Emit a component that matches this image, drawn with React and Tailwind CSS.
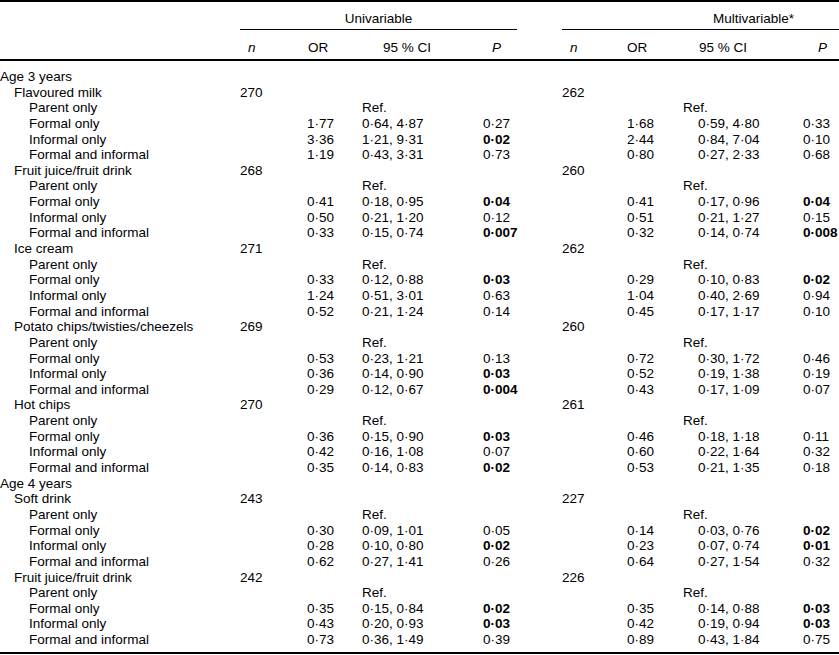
const groups = [
  {
    age: "Age 3 years",
    items: [
      {
        name: "Flavoured milk",
        n: ["270", "262"],
        rows: [
          ["Formal only", ["1·77", "0·64, 4·87", "0·27"], ["1·68", "0·59, 4·80", "0·33"]],
          ["Informal only", ["3·36", "1·21, 9·31", "*0·02"], ["2·44", "0·84, 7·04", "0·10"]],
          ["Formal and informal", ["1·19", "0·43, 3·31", "0·73"], ["0·80", "0·27, 2·33", "0·68"]],
        ],
      },
      {
        name: "Fruit juice/fruit drink",
        n: ["268", "260"],
        rows: [
          ["Formal only", ["0·41", "0·18, 0·95", "*0·04"], ["0·41", "0·17, 0·96", "*0·04"]],
          ["Informal only", ["0·50", "0·21, 1·20", "0·12"], ["0·51", "0·21, 1·27", "0·15"]],
          ["Formal and informal", ["0·33", "0·15, 0·74", "*0·007"], ["0·32", "0·14, 0·74", "*0·008"]],
        ],
      },
      {
        name: "Ice cream",
        n: ["271", "262"],
        rows: [
          ["Formal only", ["0·33", "0·12, 0·88", "*0·03"], ["0·29", "0·10, 0·83", "*0·02"]],
          ["Informal only", ["1·24", "0·51, 3·01", "0·63"], ["1·04", "0·40, 2·69", "0·94"]],
          ["Formal and informal", ["0·52", "0·21, 1·24", "0·14"], ["0·45", "0·17, 1·17", "0·10"]],
        ],
      },
      {
        name: "Potato chips/twisties/cheezels",
        n: ["269", "260"],
        rows: [
          ["Formal only", ["0·53", "0·23, 1·21", "0·13"], ["0·72", "0·30, 1·72", "0·46"]],
          ["Informal only", ["0·36", "0·14, 0·90", "*0·03"], ["0·52", "0·19, 1·38", "0·19"]],
          ["Formal and informal", ["0·29", "0·12, 0·67", "*0·004"], ["0·43", "0·17, 1·09", "0·07"]],
        ],
      },
      {
        name: "Hot chips",
        n: ["270", "261"],
        rows: [
          ["Formal only", ["0·36", "0·15, 0·90", "*0·03"], ["0·46", "0·18, 1·18", "0·11"]],
          ["Informal only", ["0·42", "0·16, 1·08", "0·07"], ["0·60", "0·22, 1·64", "0·32"]],
          ["Formal and informal", ["0·35", "0·14, 0·83", "*0·02"], ["0·53", "0·21, 1·35", "0·18"]],
        ],
      },
    ],
  },
  {
    age: "Age 4 years",
    items: [
      {
        name: "Soft drink",
        n: ["243", "227"],
        rows: [
          ["Formal only", ["0·30", "0·09, 1·01", "0·05"], ["0·14", "0·03, 0·76", "*0·02"]],
          ["Informal only", ["0·28", "0·10, 0·80", "*0·02"], ["0·23", "0·07, 0·74", "*0·01"]],
          ["Formal and informal", ["0·62", "0·27, 1·41", "0·26"], ["0·64", "0·27, 1·54", "0·32"]],
        ],
      },
      {
        name: "Fruit juice/fruit drink",
        n: ["242", "226"],
        rows: [
          ["Formal only", ["0·35", "0·15, 0·84", "*0·02"], ["0·35", "0·14, 0·88", "*0·03"]],
          ["Informal only", ["0·43", "0·20, 0·93", "*0·03"], ["0·42", "0·19, 0·94", "*0·03"]],
          ["Formal and informal", ["0·73", "0·36, 1·49", "0·39"], ["0·89", "0·43, 1·84", "0·75"]],
        ],
      },
    ],
  },
];

const cols = "grid grid-cols-[240px_67px_55px_121px_79px_65px_71px_105px_36px]";

function PVal({ v }) {
  // leading * marks a significant (bold) value
  if (v.startsWith("*")) return <span className="font-bold">{v.slice(1)}</span>;
  return <span>{v}</span>;
}

function Row({ label, indent, cells }) {
  return (
    <div className={`${cols} h-[15.65px] leading-[15.65px] whitespace-nowrap`}>
      <div className={indent}>{label}</div>
      {cells}
    </div>
  );
}

export default function App() {
  return (
    <div className="w-[839px] h-[655px] bg-white text-black text-[13.5px] font-['Liberation_Sans',Arial,sans-serif]">
      <div className="border-t-2 border-black">
        {/* spanner headings */}
        <div className={`${cols} h-[28px]`}>
          <div />
          <div className="col-span-4 pr-[45px]">
            <div className="h-[28px] border-b border-black pt-[9px] leading-[15px] text-center">
              Univariable
            </div>
          </div>
          <div className="col-span-4">
            <div className="h-[28px] border-b border-black pt-[9px] leading-[15px] pl-[151px]">
              Multivariable*
            </div>
          </div>
        </div>

        {/* column headings */}
        <div className={`${cols} h-[31px] border-b-2 border-black pt-[10px] leading-[15px]`}>
          <div />
          <div className="pl-[8px] italic">n</div>
          <div className="pl-[1px]">OR</div>
          <div className="pl-[21px]">95 % CI</div>
          <div className="pl-[9px] italic">P</div>
          <div className="pl-[8px] italic">n</div>
          <div>OR</div>
          <div className="pl-[1px]">95 % CI</div>
          <div className="pl-[15px] italic">P</div>
        </div>

        {/* body */}
        <div className="pt-[8px] pb-[4px] border-b-2 border-black">
          {groups.map((g) => (
            <div key={g.age}>
              <Row label={g.age} indent="" cells={null} />
              {g.items.map((it) => (
                <div key={g.age + it.name}>
                  <Row
                    label={it.name}
                    indent="pl-[14px]"
                    cells={
                      <>
                        <div>{it.n[0]}</div>
                        <div />
                        <div />
                        <div />
                        <div>{it.n[1]}</div>
                      </>
                    }
                  />
                  <Row
                    label="Parent only"
                    indent="pl-[29px]"
                    cells={
                      <>
                        <div />
                        <div />
                        <div>Ref.</div>
                        <div />
                        <div />
                        <div />
                        <div className="-ml-[15px]">Ref.</div>
                      </>
                    }
                  />
                  {it.rows.map(([label, u, m]) => (
                    <Row
                      key={label}
                      label={label}
                      indent="pl-[29px]"
                      cells={
                        <>
                          <div />
                          <div>{u[0]}</div>
                          <div>{u[1]}</div>
                          <div>
                            <PVal v={u[2]} />
                          </div>
                          <div />
                          <div>{m[0]}</div>
                          <div>{m[1]}</div>
                          <div>
                            <PVal v={m[2]} />
                          </div>
                        </>
                      }
                    />
                  ))}
                </div>
              ))}
            </div>
          ))}
        </div>
      </div>
    </div>
  );
}
